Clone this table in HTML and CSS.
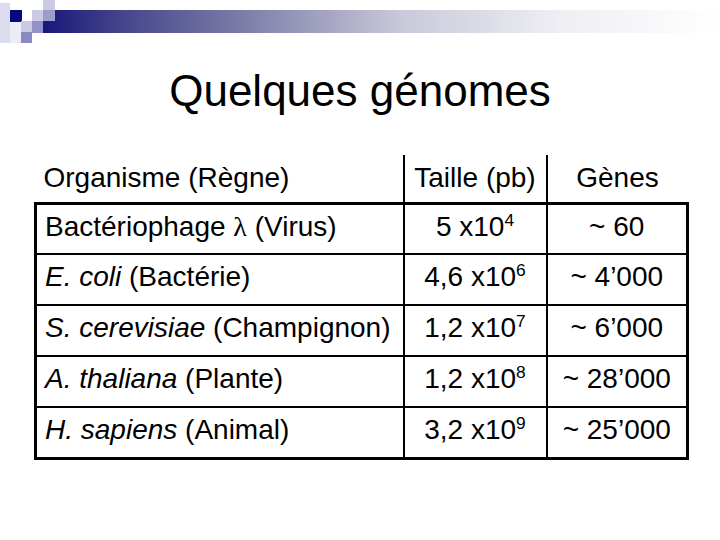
FILE: index.html
```html
<!DOCTYPE html>
<html lang="fr">
<head>
<meta charset="utf-8">
<title>Quelques génomes</title>
<link rel="stylesheet" href="styles.css">
</head>
<body>
<header class="deco">
  <svg class="deco-svg" width="720" height="50" viewBox="0 0 720 50" aria-hidden="true">
    <defs>
      <linearGradient id="bar" x1="43" y1="0" x2="720" y2="0" gradientUnits="userSpaceOnUse">
        <stop offset="0" stop-color="#18187a"/>
        <stop offset="0.12" stop-color="#46468c"/>
        <stop offset="0.29" stop-color="#7b7ba8"/>
        <stop offset="0.53" stop-color="#c9c9da"/>
        <stop offset="0.77" stop-color="#efeff4"/>
        <stop offset="1" stop-color="#ffffff"/>
      </linearGradient>
    </defs>
    <rect x="0" y="3" width="10" height="40" fill="#dcdcef"/>
    <rect x="10" y="22" width="11" height="21" fill="#ececf6"/>
    <rect x="43" y="21" width="12" height="12" fill="url(#bar)"/>
    <rect x="55" y="10" width="665" height="23" fill="url(#bar)"/>
    <rect x="10" y="10" width="12" height="12" fill="#08087e"/>
    <rect x="32" y="10" width="11" height="11" fill="#cacae6"/>
    <rect x="43" y="0" width="12" height="10" fill="#cacae6"/>
    <rect x="43" y="10" width="12" height="11" fill="#9c9ccd"/>
    <rect x="21" y="21" width="11" height="11" fill="#cacae6"/>
    <rect x="32" y="21" width="11" height="12" fill="#9292c9"/>
    <rect x="21" y="32" width="11" height="11" fill="#8a8ac2"/>
  </svg>
</header>
<main class="slide">
  <h1 class="title">Quelques génomes</h1>
  <table class="genomes">
    <thead>
      <tr>
        <th class="c1">Organisme (Règne)</th>
        <th class="c2">Taille (pb)</th>
        <th class="c3">Gènes</th>
      </tr>
    </thead>
    <tbody>
      <tr>
        <td class="c1">Bactériophage <span class="lambda">λ</span> (Virus)</td>
        <td class="c2">5 x10<sup>4</sup></td>
        <td class="c3">~ 60</td>
      </tr>
      <tr>
        <td class="c1"><i>E. coli</i> (Bactérie)</td>
        <td class="c2">4,6 x10<sup>6</sup></td>
        <td class="c3">~ 4’000</td>
      </tr>
      <tr>
        <td class="c1"><i>S. cerevisiae</i> (Champignon)</td>
        <td class="c2">1,2 x10<sup>7</sup></td>
        <td class="c3">~ 6’000</td>
      </tr>
      <tr>
        <td class="c1"><i>A. thaliana</i> (Plante)</td>
        <td class="c2">1,2 x10<sup>8</sup></td>
        <td class="c3">~ 28’000</td>
      </tr>
      <tr>
        <td class="c1"><i>H. sapiens</i> (Animal)</td>
        <td class="c2">3,2 x10<sup>9</sup></td>
        <td class="c3">~ 25’000</td>
      </tr>
    </tbody>
  </table>
</main>
</body>
</html>
```
FILE: styles.css
```css
html, body {
  margin: 0;
  padding: 0;
  background: #ffffff;
}
body {
  width: 720px;
  height: 540px;
  overflow: hidden;
  font-family: "Liberation Sans", Arial, sans-serif;
  color: #000;
}
.deco {
  height: 50px;
}
.deco-svg {
  display: block;
}
.slide {
  padding: 0 0 0 34px;
}
.title {
  margin: 15px 0 0 -34px;
  width: 720px;
  text-align: center;
  font-weight: normal;
  font-size: 44px;
  line-height: 52px;
  height: 52px;
}
.genomes {
  margin-top: 38px;
  border-collapse: collapse;
  table-layout: fixed;
  width: 652px;
  font-size: 28px;
}
.genomes th,
.genomes td {
  font-weight: normal;
  padding: 0;
  vertical-align: top;
  line-height: 32px;
  white-space: nowrap;
}
.genomes th {
  height: 48px;
  padding-top: 7px;
  box-sizing: border-box;
  border-bottom: 3px solid #000;
}
.genomes td {
  height: 51px;
  box-sizing: border-box;
  padding-top: 6px;
  border: 2px solid #000;
}
.genomes tbody tr:last-child td {
  border-bottom: 3px solid #000;
}
.genomes td.c1 {
  border-left: 3px solid #000;
}
.genomes td.c3 {
  border-right: 3px solid #000;
}
.genomes th.c2,
.genomes th.c3 {
  border-left: 2px solid #000;
}
.c1 {
  width: 368px;
  text-align: left;
  padding-left: 8px !important;
}
.c2 {
  width: 143px;
  text-align: center;
}
.c3 {
  width: 141px;
  text-align: center;
}
.lambda {
  font-family: "Liberation Serif", "Times New Roman", serif;
}
sup {
  font-size: 0.62em;
  vertical-align: 0.55em;
  line-height: 0;
}
```
